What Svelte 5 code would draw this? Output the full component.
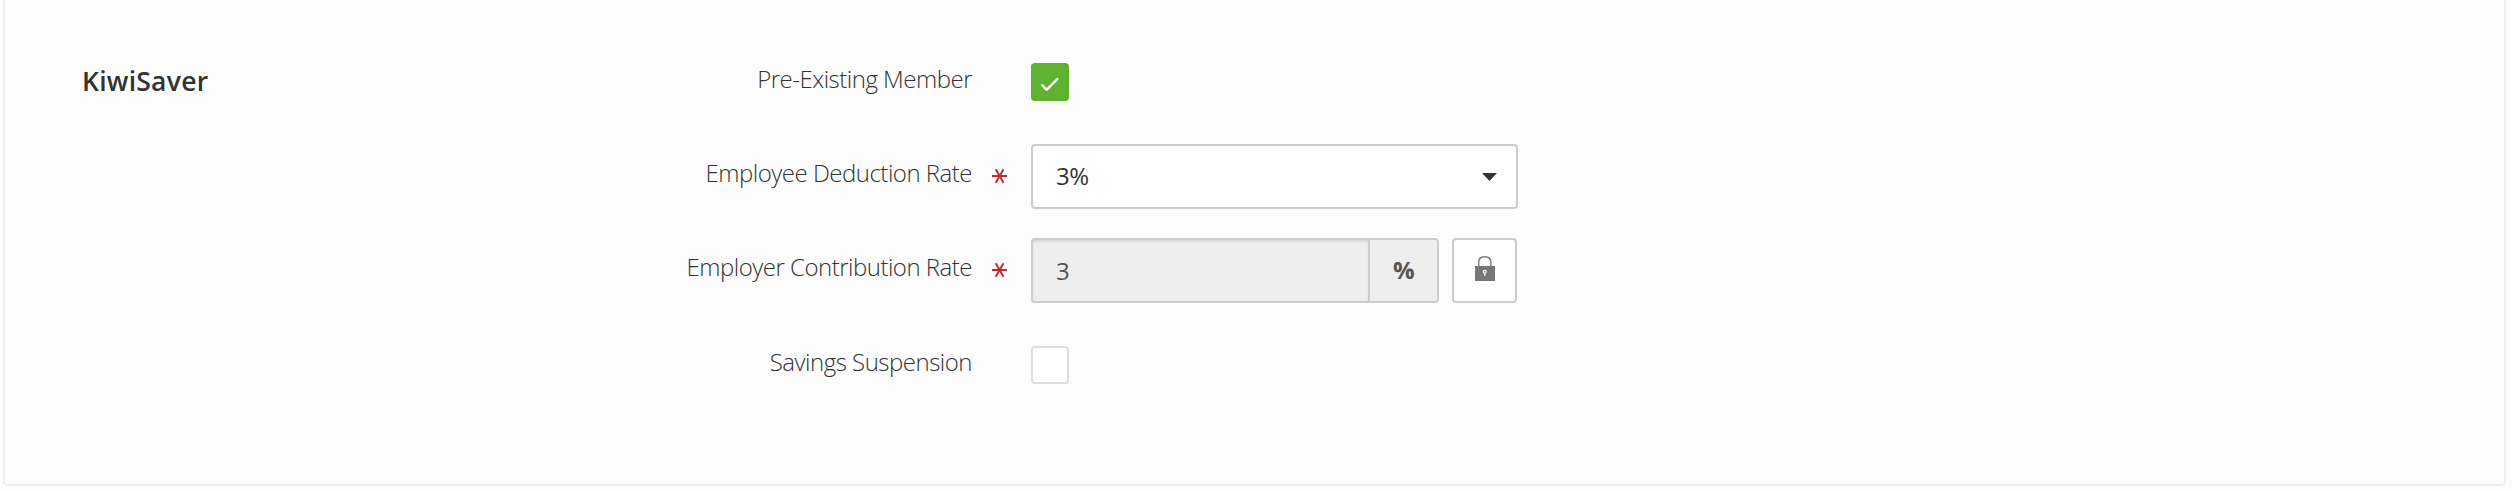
<script>
  let preExisting = $state(true);
  let suspended = $state(false);
</script>

{#snippet required()}
  <svg class="required" viewBox="0 0 15 16" aria-label="required">
    <path d="M0 8H15M3.7 1.2L11.5 14.8M11.5 1.2L3.7 14.8" />
  </svg>
{/snippet}

<section class="panel">
  <h2>KiwiSaver</h2>
  <div class="form">
    <div class="row">
      <span class="label">Pre-Existing Member</span>
      <span class="marker"></span>
      <button class="check" class:checked={preExisting} aria-label="Pre-Existing Member" onclick={() => (preExisting = !preExisting)}>
        {#if preExisting}
          <svg viewBox="0 0 38 38"><path d="M11.2 22.2L15.6 26.8L26.4 16" /></svg>
        {/if}
      </button>
    </div>
    <div class="row">
      <span class="label">Employee Deduction Rate</span>
      <span class="marker">{@render required()}</span>
      <div class="select">
        <span>3%</span>
        <svg viewBox="0 0 15 8"><path d="M0 0H15L7.5 8Z" /></svg>
      </div>
    </div>
    <div class="row">
      <span class="label">Employer Contribution Rate</span>
      <span class="marker">{@render required()}</span>
      <div class="group">
        <span class="value">3</span>
        <span class="addon">%</span>
      </div>
      <button class="lock" aria-label="Locked">
        <svg viewBox="0 0 20 26">
          <path class="shackle" d="M3.7 11V6.2C3.7 2.7 6.3 0.7 9.8 0.7S15.9 2.7 15.9 6.2V11" />
          <path class="body" d="M0 10H20V25H0Z" />
          <circle cx="9.8" cy="15.8" r="1.5" />
          <path class="key" d="M9.8 17.2V20" />
        </svg>
      </button>
    </div>
    <div class="row last">
      <span class="label">Savings Suspension</span>
      <span class="marker"></span>
      <button class="check" class:checked={suspended} aria-label="Savings Suspension" onclick={() => (suspended = !suspended)}></button>
    </div>
  </div>
</section>

<style>
  :global(body) {
    background: #fdfdfd;
  }
  .panel {
    box-sizing: border-box;
    width: 2503px;
    height: 486px;
    margin-left: 3px;
    padding: 35px 0 0 78px;
    display: flex;
    background: #fcfcfc;
    border: 2px solid #eee;
    border-top: 0;
    border-radius: 0 0 5px 5px;
    font-family: "Open Sans", sans-serif;
    color: #333;
  }
  h2 {
    width: 501px;
    margin: 28px 0 0 -1px;
    font-size: 26.5px;
    line-height: 36px;
    font-weight: 600;
    letter-spacing: 0.25px;
  }
  .row {
    height: 94px;
    display: flex;
    align-items: center;
  }
  .last {
    height: 96px;
  }
  .label {
    width: 389px;
    padding-bottom: 6px;
    text-align: right;
    white-space: nowrap;
    font-size: 24px;
    line-height: 34px;
    font-weight: 300;
    letter-spacing: -0.5px;
  }
  .marker {
    width: 59px;
    display: flex;
    padding-left: 20px;
    box-sizing: border-box;
  }
  .required {
    width: 15px;
    height: 16px;
  }
  .required path {
    stroke: #b92c31;
    stroke-width: 1.9;
    fill: none;
  }
  button {
    padding: 0;
    box-sizing: border-box;
    display: flex;
    align-items: center;
    justify-content: center;
    background: #fff;
  }
  .check {
    width: 38px;
    height: 38px;
    border: 2px solid #ddd;
    border-radius: 4px;
  }
  .check.checked {
    border: 0;
    background: #5fb130;
  }
  .check svg {
    width: 38px;
    height: 38px;
  }
  .check path {
    fill: none;
    stroke: #fff;
    stroke-width: 2.4;
    stroke-linecap: round;
    stroke-linejoin: round;
  }
  .select,
  .group,
  .lock {
    box-sizing: border-box;
    height: 65px;
    margin-top: 1px;
    border: 2px solid #ccc;
    border-radius: 4px;
  }
  .select {
    width: 487px;
    display: flex;
    align-items: center;
    justify-content: space-between;
    padding: 0 19px 0 23px;
    background: #fff;
    font-size: 24px;
    letter-spacing: -0.5px;
  }
  .select span {
    padding-bottom: 2px;
  }
  .select svg {
    width: 15px;
    height: 8px;
    fill: #333;
  }
  .group {
    width: 408px;
    display: flex;
    font-size: 24px;
    line-height: 61px;
    background: #eee;
    color: #555;
  }
  .value {
    flex: 1;
    padding-left: 23px;
    box-shadow: inset 0 2px 2px rgba(0, 0, 0, 0.075);
  }
  .addon {
    width: 67px;
    border-left: 2px solid #ccc;
    text-align: center;
    line-height: 59px;
    font-weight: 700;
    letter-spacing: -0.5px;
  }
  .lock {
    width: 65px;
    margin-left: 13px;
  }
  .lock svg {
    width: 20px;
    height: 26px;
    margin-bottom: 3px;
  }
  .shackle {
    fill: none;
    stroke: #777;
    stroke-width: 1.4;
  }
  .body {
    fill: #777;
  }
  .lock circle,
  .key {
    fill: none;
    stroke: #fff;
    stroke-width: 1.2;
  }
</style>
